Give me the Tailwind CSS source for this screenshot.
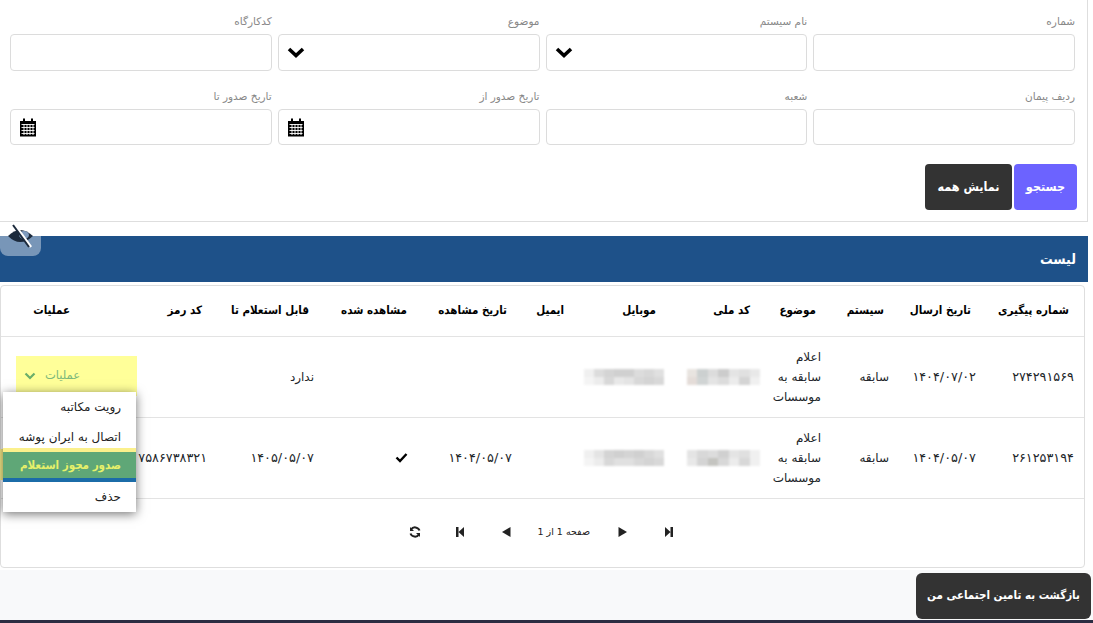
<!DOCTYPE html>
<html lang="fa" dir="rtl">
<head>
    <meta charset="UTF-8">
    <title>لیست</title>
    <script src="https://cdn.jsdelivr.net/npm/@tailwindcss/browser@4"></script>
</head>
<body class="relative h-[623px] overflow-hidden bg-white font-['DejaVu_Sans',sans-serif] text-[#212529]">
    <div class="mr-[5px]">
        <!-- search form -->
        <div class="border-b border-r border-[#dedede] pt-[14px] pr-[12px] pl-[10px] pb-[11px]">
            <form class="grid grid-cols-4 gap-x-[6px] gap-y-[18px] text-[10.5px] text-[#888]">
                <div>
                    <label class="block h-[14px] mb-[6px] leading-[14px]">شماره</label>
                    <div class="h-[36.5px] rounded border border-[#dcdcdc] bg-white"></div>
                </div>
                <div>
                    <label class="block h-[14px] mb-[6px] leading-[14px]">نام سیستم</label>
                    <div class="flex h-[36.5px] items-center justify-end rounded border border-[#dcdcdc] bg-white pl-[8px]">
                        <svg class="w-[18px] h-[12px]" viewBox="0 0 18 12"><path d="M2 3l7 6.5L16 3" fill="none" stroke="#000" stroke-width="3.6"/></svg>
                    </div>
                </div>
                <div>
                    <label class="block h-[14px] mb-[6px] leading-[14px]">موضوع</label>
                    <div class="flex h-[36.5px] items-center justify-end rounded border border-[#dcdcdc] bg-white pl-[8px]">
                        <svg class="w-[18px] h-[12px]" viewBox="0 0 18 12"><path d="M2 3l7 6.5L16 3" fill="none" stroke="#000" stroke-width="3.6"/></svg>
                    </div>
                </div>
                <div>
                    <label class="block h-[14px] mb-[6px] leading-[14px]">کدکارگاه</label>
                    <div class="h-[36.5px] rounded border border-[#dcdcdc] bg-white"></div>
                </div>
                <div>
                    <label class="block h-[14px] mb-[6px] leading-[14px]">ردیف پیمان</label>
                    <div class="h-[36.5px] rounded border border-[#dcdcdc] bg-white"></div>
                </div>
                <div>
                    <label class="block h-[14px] mb-[6px] leading-[14px]">شعبه</label>
                    <div class="h-[36.5px] rounded border border-[#dcdcdc] bg-white"></div>
                </div>
                <div>
                    <label class="block h-[14px] mb-[6px] leading-[14px]">تاریخ صدور از</label>
                    <div class="flex h-[36.5px] items-center justify-end rounded border border-[#dcdcdc] bg-white pl-[8px]">
                        <svg class="w-[18px] h-[20px]" viewBox="0 0 18 20"><path d="M1 4h3V1.500h2V4h6V1.500h2V4h3v15.500H1z" fill="#000"/><path d="M2.500 7.500h13M2.500 10.500h13M2.500 13.500h13M2.500 16.500h13M5 7v11M8 7v11M11 7v11M14 7v11" stroke="#fff" stroke-width=".9"/></svg>
                    </div>
                </div>
                <div>
                    <label class="block h-[14px] mb-[6px] leading-[14px]">تاریخ صدور تا</label>
                    <div class="flex h-[36.5px] items-center justify-end rounded border border-[#dcdcdc] bg-white pl-[8px]">
                        <svg class="w-[18px] h-[20px]" viewBox="0 0 18 20"><path d="M1 4h3V1.500h2V4h6V1.500h2V4h3v15.500H1z" fill="#000"/><path d="M2.500 7.500h13M2.500 10.500h13M2.500 13.500h13M2.500 16.500h13M5 7v11M8 7v11M11 7v11M14 7v11" stroke="#fff" stroke-width=".9"/></svg>
                    </div>
                </div>
            </form>
            <div class="mt-[19px] -mr-[2px] flex gap-[2px] font-['DejaVu_Sans_Condensed','DejaVu_Sans',sans-serif] text-[12.5px] font-bold text-white">
                <button type="button" class="h-[46px] w-[63px] rounded bg-[#6c63ff]">جستجو</button>
                <button type="button" class="h-[46px] w-[87px] rounded bg-[#333]">نمایش همه</button>
            </div>
        </div>

        <!-- list -->
        <div class="mt-[14px] flex h-[46px] items-center bg-[#1e5189] pr-[12px] font-['DejaVu_Sans_Condensed','DejaVu_Sans',sans-serif] text-[14px] font-bold text-white">لیست</div>

        <div class="mt-[3px] mr-[3px] h-[283px] rounded-sm border border-[#dedede]">
            <table class="w-full table-fixed border-collapse text-[12px]">
                <colgroup>
                    <col class="w-[98px]"><col class="w-[87px]"><col class="w-[68px]"><col class="w-[66px]"><col class="w-[94px]"><col class="w-[92px]"><col class="w-[57px]"><col class="w-[100px]"><col class="w-[98px]"><col class="w-[107px]"><col class="w-[132px]"><col>
                </colgroup>
                <thead>
                    <tr class="h-[50px] border-b border-[#e3e3e3] text-right font-['DejaVu_Sans_Condensed','DejaVu_Sans',sans-serif] text-[11.5px] font-bold text-black">
                        <th class="pr-[15px] whitespace-nowrap">شماره پیگیری</th>
                        <th class="pr-[15px] whitespace-nowrap">تاریخ ارسال</th>
                        <th class="pr-[15px] whitespace-nowrap">سیستم</th>
                        <th class="pr-[15px] whitespace-nowrap">موضوع</th>
                        <th class="pr-[15px] whitespace-nowrap">کد ملی</th>
                        <th class="pr-[15px] whitespace-nowrap">موبایل</th>
                        <th class="pr-[15px] whitespace-nowrap">ایمیل</th>
                        <th class="pr-[15px] whitespace-nowrap">تاریخ مشاهده</th>
                        <th class="pr-[15px] whitespace-nowrap">مشاهده شده</th>
                        <th class="pr-[15px] whitespace-nowrap">قابل استعلام تا</th>
                        <th class="pr-[15px] whitespace-nowrap">کد رمز</th>
                        <th class="pr-[15px] whitespace-nowrap">عملیات</th>
                    </tr>
                </thead>
                <tbody class="text-right">
                    <tr class="h-[81px] border-b border-[#e3e3e3]">
                        <td class="pr-[10px] text-[12.8px]">۲۷۴۲۹۱۵۶۹</td>
                        <td class="pr-[10px] text-[12.8px]">۱۴۰۴/۰۷/۰۲</td>
                        <td class="pr-[10px]">سابقه</td>
                        <td class="pr-[10px] leading-[20px]">اعلام<br>سابقه به<br>موسسات</td>
                        <td class="pr-[5px]">
                            <div class="grid h-[16px] w-[73px] grid-cols-7 blur-[1px]">
                                <i class="bg-[#e8e8e8]"></i><i class="bg-[#e0e0e0]"></i><i class="bg-[#e4e4e4]"></i><i class="bg-[#ccc]"></i><i class="bg-[#dcdcdc]"></i><i class="bg-[#ccd0d0]"></i><i class="bg-[#e8e4e0]"></i>
                                <i class="bg-[#f0f0f0]"></i><i class="bg-[#d4d4d4]"></i><i class="bg-[#ececec]"></i><i class="bg-[#dcdcdc]"></i><i class="bg-[#e4e4e4]"></i><i class="bg-[#d0d4d4]"></i><i class="bg-[#e4dcd8]"></i>
                            </div>
                        </td>
                        <td class="pr-[7px]">
                            <div class="grid h-[16px] w-[80px] grid-cols-8 blur-[1px]">
                                <i class="bg-[#e0e0e0]"></i><i class="bg-[#d8d8d8]"></i><i class="bg-[#dcdcdc]"></i><i class="bg-[#d0d0d0]"></i><i class="bg-[#d0d0d0]"></i><i class="bg-[#d4d4d4]"></i><i class="bg-[#dcdcdc]"></i><i class="bg-[#f0f0f0]"></i>
                                <i class="bg-[#d8d8d8]"></i><i class="bg-[#d4d4d4]"></i><i class="bg-[#d8d8d8]"></i><i class="bg-[#e4e4e4]"></i><i class="bg-[#e8e8e8]"></i><i class="bg-[#d8d8d8]"></i><i class="bg-[#ececec]"></i><i class="bg-[#f4f4f4]"></i>
                            </div>
                        </td>
                        <td></td>
                        <td></td>
                        <td></td>
                        <td class="pr-[10px]">ندارد</td>
                        <td></td>
                        <td></td>
                    </tr>
                    <tr class="h-[81px] border-b border-[#e3e3e3]">
                        <td class="pr-[10px] text-[12.8px]">۲۶۱۲۵۳۱۹۴</td>
                        <td class="pr-[10px] text-[12.8px]">۱۴۰۴/۰۵/۰۷</td>
                        <td class="pr-[10px]">سابقه</td>
                        <td class="pr-[10px] leading-[20px]">اعلام<br>سابقه به<br>موسسات</td>
                        <td class="pr-[5px]">
                            <div class="grid h-[16px] w-[73px] grid-cols-7 blur-[1px]">
                                <i class="bg-[#f0f0f0]"></i><i class="bg-[#e0e0e0]"></i><i class="bg-[#e4e4e4]"></i><i class="bg-[#d0d0d0]"></i><i class="bg-[#dcdcdc]"></i><i class="bg-[#d8d8d8]"></i><i class="bg-[#e4e4e4]"></i>
                                <i class="bg-[#f0f0f0]"></i><i class="bg-[#d8d8d8]"></i><i class="bg-[#ececec]"></i><i class="bg-[#d8d8d8]"></i><i class="bg-[#c4c4c0]"></i><i class="bg-[#d4d4d4]"></i><i class="bg-[#e8e8e8]"></i>
                            </div>
                        </td>
                        <td class="pr-[7px]">
                            <div class="grid h-[16px] w-[80px] grid-cols-8 blur-[1px]">
                                <i class="bg-[#e0e0e0]"></i><i class="bg-[#d8d8d8]"></i><i class="bg-[#d0d0d0]"></i><i class="bg-[#d4d4d4]"></i><i class="bg-[#d0d0d0]"></i><i class="bg-[#d4d4d4]"></i><i class="bg-[#e4e4e4]"></i><i class="bg-[#f0f0f0]"></i>
                                <i class="bg-[#d8d8d8]"></i><i class="bg-[#d4d4d4]"></i><i class="bg-[#d8d8d8]"></i><i class="bg-[#e0e0e0]"></i><i class="bg-[#e0e0e0]"></i><i class="bg-[#d8d8d8]"></i><i class="bg-[#ececec]"></i><i class="bg-[#f4f4f4]"></i>
                            </div>
                        </td>
                        <td></td>
                        <td class="pr-[10px] text-[12.8px]">۱۴۰۴/۰۵/۰۷</td>
                        <td class="pr-[14px]">
                            <svg class="w-[13px] h-[11px]" viewBox="0 0 13 11"><path d="M1.500 5.500l3.500 3.500 6.500-7" fill="none" stroke="#000" stroke-width="2.400"/></svg>
                        </td>
                        <td class="pr-[10px] text-[12.8px]">۱۴۰۵/۰۵/۰۷</td>
                        <td class="pr-[10px] text-[12.8px] whitespace-nowrap">۷۵۸۶۷۳۸۳۲۱</td>
                        <td></td>
                    </tr>
                </tbody>
            </table>

            <!-- pager -->
            <div class="mt-[26px] flex items-center pl-[408px] text-[9.5px] text-[#222]" dir="ltr">
                <svg class="w-[12px] h-[12px]" viewBox="0 0 12 12"><path d="M10.500 4.500A4.800 4.800 0 0 0 2 3.500M1.500 7.500A4.800 4.800 0 0 0 10 8.500" fill="none" stroke="#222" stroke-width="2"/><path d="M1 1v4h4zM11 11V7H7z" fill="#222"/></svg>
                <svg class="ml-[34px] w-[10px] h-[12px]" viewBox="0 0 10 12"><path d="M1 1h2.500v10H1zM9 1v10L3.500 6z" fill="#222"/></svg>
                <svg class="ml-[36px] w-[10px] h-[12px]" viewBox="0 0 10 12"><path d="M9.500 1v10L1 6z" fill="#222"/></svg>
                <span dir="rtl" class="ml-[29px] w-[50px] whitespace-nowrap text-center">صفحه 1 از 1</span>
                <svg class="ml-[28px] w-[10px] h-[12px]" viewBox="0 0 10 12"><path d="M.5 1v10L9 6z" fill="#222"/></svg>
                <svg class="ml-[36px] w-[10px] h-[12px]" viewBox="0 0 10 12"><path d="M9 1H6.500v10H9zM1 1v10l5.500-5z" fill="#222"/></svg>
            </div>
        </div>
    </div>

    <!-- footer -->
    <div class="mt-[2px] flex h-[50px] bg-[#f8f9fa] pt-[3px] pr-[2px]">
        <button type="button" class="h-[46px] w-[175px] rounded-md bg-[#333] font-['DejaVu_Sans_Condensed','DejaVu_Sans',sans-serif] text-[11.5px] font-bold text-white">بازگشت به تامین اجتماعی من</button>
    </div>
    <div class="h-[3px] bg-[#2b2d42]"></div>

    <!-- overlays -->
    <button type="button" class="absolute left-0 top-[236px] h-[20px] w-[41px] rounded-b-lg bg-white/40"></button>
    <svg class="absolute left-[5px] top-[224px] h-[26px] w-[30px]" viewBox="0 0 30 26">
        <path d="M3 12Q15 0 28 12 15 24 3 12z" fill="#1c2a3c"/>
        <ellipse cx="19" cy="11" rx="5" ry="4" fill="#7f9bbd"/>
        <path d="M10 1l16 22" stroke="#fff" stroke-width="2.500"/>
        <path d="M8 1l16 22" stroke="#1c2a3c" stroke-width="2"/>
    </svg>

    <div class="absolute left-[16px] top-[356px] flex h-[40px] w-[121px] items-center justify-end gap-[9px] bg-[#ffff99] pl-[8px] text-[11.5px] text-[#7cb87c]">
        عملیات
        <svg class="w-[12px] h-[8px]" viewBox="0 0 12 8"><path d="M1.500 1.500l4.500 4.500 4.500-4.500" fill="none" stroke="#6aae6a" stroke-width="2.200"/></svg>
    </div>

    <div class="absolute left-0 top-[449px] h-[31px] w-[3px] bg-[#fbf08c]"></div>
    <ul class="absolute left-[3px] top-[392px] w-[133px] bg-white text-[12px] text-[#222] shadow-[0_2px_10px_rgba(0,0,0,0.55)]">
        <li class="flex h-[30px] items-center pr-[15px]">رویت مکاتبه</li>
        <li class="flex h-[30px] items-center border-b-[4px] border-b-[#fbf08c] pr-[15px] pt-[3px]">اتصال به ایران پوشه</li>
        <li class="flex h-[30px] items-center border-b-[4px] border-b-[#1b6ca8] bg-[#5fa777] pr-[15px] pt-[2px] font-['DejaVu_Sans_Condensed','DejaVu_Sans',sans-serif] text-[11.5px] font-bold text-[#e6f06a]">صدور مجوز استعلام</li>
        <li class="flex h-[30px] items-center pr-[15px]">حذف</li>
    </ul>
</body>
</html>
